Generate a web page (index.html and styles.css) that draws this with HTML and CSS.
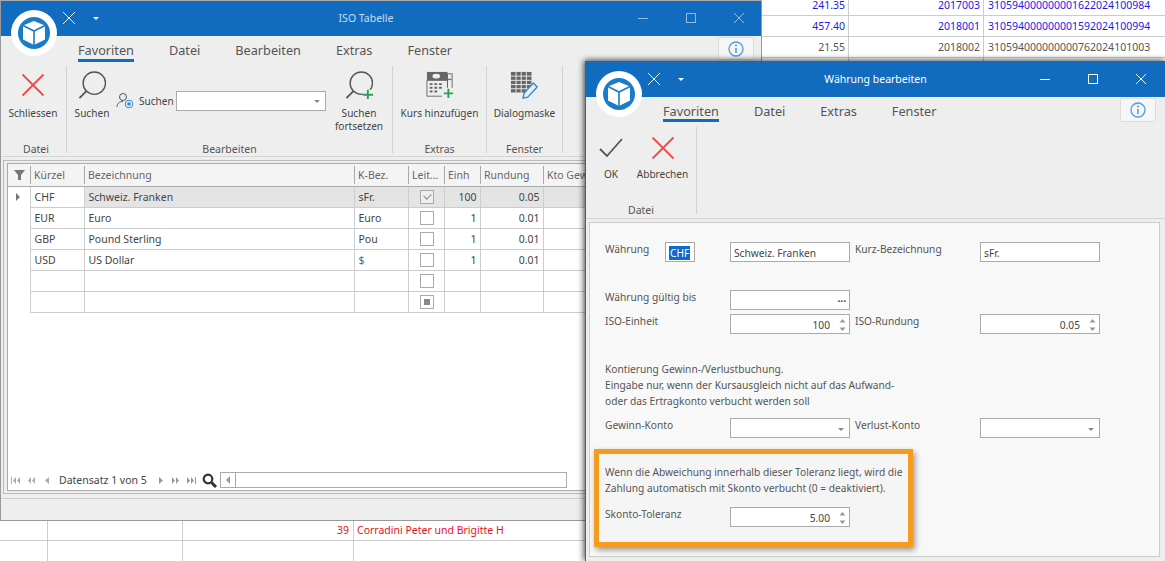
FILE: index.html
```html
<!DOCTYPE html>
<html>
  <head>
    <meta charset="utf-8">
    <title>Währung bearbeiten</title>
    <link rel="stylesheet" href="styles.css">
  </head>
  <body>
    <svg class="defs" width="0" height="0">
      <symbol id="logo" viewBox="0 0 46 46">
        <circle cx="23" cy="23" r="23" fill="#fff"/>
        <circle cx="23" cy="23" r="16" fill="#1a7cc9"/>
        <path d="M23 11l11 4.500v14l-11 5.500-11-5.500v-14z" fill="#fff"/>
        <path d="M12 15.500l11 5.500 11-5.500M23 21v14" fill="none" stroke="#1a7cc9" stroke-width="1.600"/>
      </symbol>
      <symbol id="cross" viewBox="0 0 24 24">
        <path d="M1.500 1.500l21 21M22.500 1.500l-21 21" fill="none" stroke="#f04b4b" stroke-width="1.800"/>
      </symbol>
      <symbol id="info" viewBox="0 0 18 18">
        <circle cx="9" cy="9" r="7" fill="none" stroke="#4b9fe0" stroke-width="1.300"/>
        <path d="M9 8v5" stroke="#4b9fe0" stroke-width="1.600"/>
        <circle cx="9" cy="5.600" r="1" fill="#4b9fe0"/>
      </symbol>
      <symbol id="spin" viewBox="0 0 9 16">
        <path d="M4.500 2l3 3.500h-6zM4.500 14l3-3.500h-6z" fill="#999"/>
      </symbol>
    </svg>

    <!-- Tabelle im Hintergrund -->
    <div class="sheet sheet-top">
      <div class="sheet-row blue"><span>241.35</span><span>2017003</span><span>310594000000001622024100984</span></div>
      <div class="sheet-row blue"><span>457.40</span><span>2018001</span><span>310594000000001592024100994</span></div>
      <div class="sheet-row"><span>21.55</span><span>2018002</span><span>310594000000000762024101003</span></div>
      <div class="sheet-row"><span></span><span></span><span></span></div>
    </div>
    <div class="sheet sheet-bottom">
      <div class="sheet-row red"><span></span><span></span><span>39</span><span>Corradini Peter und Brigitte H</span></div>
      <div class="sheet-row"><span></span><span></span><span></span><span></span></div>
    </div>

    <!-- ISO Tabelle -->
    <div class="win win-iso">
      <div class="titlebar inactive">
        <svg class="logo"><use href="#logo"/></svg>
        <svg class="qat-x" viewBox="0 0 12 12"><path d="M0 0l12 12M12 0L0 12" fill="none" stroke="#fff" stroke-width="1"/></svg>
        <span class="qat-caret"></span>
        <span class="title">ISO Tabelle</span>
        <span class="winbtns">
          <svg viewBox="0 0 12 12"><path d="M1 6.500h10" stroke="#fff" stroke-width="1"/></svg>
          <svg viewBox="0 0 12 12"><rect x="1.500" y="1.500" width="9" height="9" fill="none" stroke="#fff"/></svg>
          <svg viewBox="0 0 12 12"><path d="M1 1l10 10M11 1L1 11" fill="none" stroke="#fff"/></svg>
        </span>
      </div>
      <div class="tabs">
        <span class="tab active">Favoriten</span>
        <span class="tab">Datei</span>
        <span class="tab">Bearbeiten</span>
        <span class="tab">Extras</span>
        <span class="tab">Fenster</span>
        <span class="infobtn"><svg width="18" height="18"><use href="#info"/></svg></span>
      </div>
      <div class="ribbon">
        <div class="group g-datei">
          <div class="items">
            <div class="item"><svg class="big" viewBox="0 0 24 24"><use href="#cross"/></svg><span>Schliessen</span></div>
          </div>
          <div class="group-name">Datei</div>
        </div>
        <div class="group g-bearb">
          <div class="items">
            <div class="item">
              <svg class="big" viewBox="0 0 30 30"><circle cx="17.500" cy="13" r="12" fill="none" stroke="#555" stroke-width="1.500"/><path d="M9 21.500L1.500 29" stroke="#555" stroke-width="2"/></svg>
              <span>Suchen</span>
            </div>
            <div class="search-combo">
              <svg width="18" height="18" viewBox="0 0 18 18"><circle cx="7" cy="5" r="3.500" fill="none" stroke="#555"/><path d="M1 15c0-3.500 2.500-5.500 6-5.500" fill="none" stroke="#555"/><circle cx="13" cy="12" r="3.800" fill="none" stroke="#2d8ad6"/><circle cx="13" cy="12" r="1.800" fill="#2d8ad6"/></svg>
              <span class="search-label">Suchen</span>
              <span class="combo"><i class="caret"></i></span>
            </div>
            <div class="item">
              <svg class="big" viewBox="0 0 30 30"><circle cx="17.500" cy="13" r="12" fill="none" stroke="#555" stroke-width="1.500"/><path d="M9 21.500L1.500 29" stroke="#555" stroke-width="2"/><rect x="19" y="20" width="11" height="10" fill="#eee"/><path d="M24.500 20v11M19 25.500h11" stroke="#2f9e4f" stroke-width="2"/></svg>
              <span>Suchen<br>fortsetzen</span>
            </div>
          </div>
          <div class="group-name">Bearbeiten</div>
        </div>
        <div class="group g-extras">
          <div class="items">
            <div class="item">
              <svg class="big" viewBox="0 0 30 30"><rect x="1" y="1" width="22" height="9" fill="#666"/><ellipse cx="11" cy="5.500" rx="4" ry="2.500" fill="#eee"/><rect x="23" y="3" width="5" height="20" fill="none" stroke="#666"/><path d="M1 10h22v17H1z" fill="none" stroke="#666"/><path d="M4 13h3v2H4zM9 13h3v2H9zM14 13h3v2h-3zM4 17h3v2H4zM9 17h3v2H9zM14 17h3v2h-3zM4 21h3v2H4zM9 21h3v2H9z" fill="#666"/><path d="M23.500 9h4" stroke="#2d8ad6" stroke-width="1.500"/><rect x="17" y="18" width="13" height="12" fill="#eee"/><path d="M24 19v10M19 24h10" stroke="#2f9e4f" stroke-width="2"/></svg>
              <span>Kurs hinzufügen</span>
            </div>
          </div>
          <div class="group-name">Extras</div>
        </div>
        <div class="group g-fenster">
          <div class="items">
            <div class="item">
              <svg class="big" viewBox="0 0 30 30"><rect x="1" y="1" width="22" height="22" fill="#666"/><path d="M1 5.500h22M1 10h22M1 14.500h22M1 19h22M6.500 1v22M12 1v22M17.500 1v22" stroke="#eee" stroke-width="1"/><path d="M14 29l1-5 10-11 4 4-10 11z" fill="#eee" stroke="#2d8ad6" stroke-width="1.500"/></svg>
              <span>Dialogmaske</span>
            </div>
          </div>
          <div class="group-name">Fenster</div>
        </div>
      </div>
      <div class="gridframe">
        <div class="gridbox">
          <table class="grid">
            <colgroup>
              <col class="c-ind"><col class="c-kz"><col class="c-bez"><col class="c-kb"><col class="c-leit"><col class="c-einh"><col class="c-rund"><col class="c-kto">
            </colgroup>
            <thead>
              <tr>
                <th class="ind"><svg width="11" height="10" viewBox="0 0 11 10"><path d="M0 0h11L7 5v5H4V5z" fill="#777"/></svg></th>
                <th><span>Kürzel</span></th><th><span>Bezeichnung</span></th><th><span>K-Bez.</span></th><th><span>Leit…</span></th><th><span>Einh</span></th><th><span>Rundung</span></th><th><span>Kto Gewinn</span></th>
              </tr>
            </thead>
            <tbody>
              <tr class="current">
                <td class="ind"><i class="rowmark"></i></td><td class="focus">CHF</td><td>Schweiz. Franken</td><td>sFr.</td><td class="chk"><i class="box checked"></i></td><td class="num">100</td><td class="num">0.05</td><td></td>
              </tr>
              <tr><td class="ind"></td><td>EUR</td><td>Euro</td><td>Euro</td><td class="chk"><i class="box"></i></td><td class="num">1</td><td class="num">0.01</td><td></td></tr>
              <tr><td class="ind"></td><td>GBP</td><td>Pound Sterling</td><td>Pou</td><td class="chk"><i class="box"></i></td><td class="num">1</td><td class="num">0.01</td><td></td></tr>
              <tr><td class="ind"></td><td>USD</td><td>US Dollar</td><td class="dollar">$</td><td class="chk"><i class="box"></i></td><td class="num">1</td><td class="num">0.01</td><td></td></tr>
              <tr><td class="ind"></td><td></td><td></td><td></td><td class="chk"><i class="box"></i></td><td></td><td></td><td></td></tr>
              <tr><td class="ind"></td><td></td><td></td><td></td><td class="chk"><i class="box mixed"></i></td><td></td><td></td><td></td></tr>
            </tbody>
          </table>
          <div class="gridnav">
            <svg class="navicons" width="42" height="7" viewBox="0 0 42 7"><path d="M0 0h1v7H0zM5 0v7L2 3.500zM9 0v7L6 3.500zM20 0v7l-3-3.500zM24 0v7l-3-3.500zM38 0v7l-4-3.500z" fill="#aaa"/></svg>
            <span class="navtext">Datensatz 1 von 5</span>
            <svg class="navicons" width="38" height="7" viewBox="0 0 38 7"><path d="M0 0v7l4-3.500zM13 0v7l3-3.500zM17 0v7l3-3.500zM28 0v7l3-3.500zM32 0v7l3-3.500zM36 0h1v7h-1z" fill="#999"/></svg>
            <svg class="navsearch" width="15" height="15" viewBox="0 0 15 15"><circle cx="6" cy="6" r="4.300" fill="none" stroke="#333" stroke-width="2.200"/><path d="M9.500 9.500L14 14" stroke="#333" stroke-width="3"/></svg>
            <span class="hscroll"><b></b></span>
          </div>
        </div>
      </div>
      <div class="statusbar"></div>
    </div>

    <!-- Währung bearbeiten -->
    <div class="win win-cur">
      <div class="titlebar">
        <svg class="logo"><use href="#logo"/></svg>
        <svg class="qat-x" viewBox="0 0 12 12"><path d="M0 0l12 12M12 0L0 12" fill="none" stroke="#fff" stroke-width="1"/></svg>
        <span class="qat-caret"></span>
        <span class="title">Währung bearbeiten</span>
        <span class="winbtns">
          <svg viewBox="0 0 12 12"><path d="M1 6.500h10" stroke="#fff" stroke-width="1"/></svg>
          <svg viewBox="0 0 12 12"><rect x="1.500" y="1.500" width="9" height="9" fill="none" stroke="#fff"/></svg>
          <svg viewBox="0 0 12 12"><path d="M1 1l10 10M11 1L1 11" fill="none" stroke="#fff"/></svg>
        </span>
      </div>
      <div class="tabs">
        <span class="tab active">Favoriten</span>
        <span class="tab">Datei</span>
        <span class="tab">Extras</span>
        <span class="tab">Fenster</span>
        <span class="infobtn"><svg width="18" height="18"><use href="#info"/></svg></span>
      </div>
      <div class="ribbon ribbon-cur">
        <div class="group g-ok">
          <div class="items">
            <div class="item item-ok"><svg class="big" viewBox="0 0 24 24"><path d="M1 13l7 7L23 3" fill="none" stroke="#555" stroke-width="1.800"/></svg><span>OK</span></div>
            <div class="item item-cancel"><svg class="big" viewBox="0 0 24 24"><use href="#cross"/></svg><span>Abbrechen</span></div>
          </div>
          <div class="group-name">Datei</div>
        </div>
      </div>
      <div class="formpanel">
        <div class="row">
          <label class="lab-cur">Währung</label>
          <span class="field f-chf"><span class="sel">CHF</span></span>
          <span class="field"><span>Schweiz. Franken</span></span>
          <label class="lab2">Kurz-Bezeichnung</label>
          <span class="field"><span>sFr.</span></span>
        </div>
        <div class="row row-date">
          <label class="lab1">Währung gültig bis</label>
          <span class="field end"><span class="dots">···</span></span>
        </div>
        <div class="row row-iso">
          <label class="lab1">ISO-Einheit</label>
          <span class="field end"><span>100</span><svg class="spin"><use href="#spin"/></svg></span>
          <label class="lab2">ISO-Rundung</label>
          <span class="field end"><span>0.05</span><svg class="spin"><use href="#spin"/></svg></span>
        </div>
        <p class="note">Kontierung Gewinn-/Verlustbuchung.<br>Eingabe nur, wenn der Kursausgleich nicht auf das Aufwand-<br>oder das Ertragkonto verbucht werden soll</p>
        <div class="row">
          <label class="lab1">Gewinn-Konto</label>
          <span class="field end"><i class="caret"></i></span>
          <label class="lab2">Verlust-Konto</label>
          <span class="field end"><i class="caret"></i></span>
        </div>
        <div class="callout">
          <p class="note">Wenn die Abweichung innerhalb dieser Toleranz liegt, wird die<br>Zahlung automatisch mit Skonto verbucht (0 = deaktiviert).</p>
          <div class="row">
            <label class="lab1">Skonto-Toleranz</label>
            <span class="field end"><span>5.00</span><svg class="spin"><use href="#spin"/></svg></span>
          </div>
        </div>
      </div>
    </div>
  </body>
</html>
```

FILE: styles.css
```css
* {
  box-sizing: border-box;
}
html, body {
  margin: 0;
  height: 100%;
}
body {
  position: relative;
  width: 1165px;
  height: 561px;
  overflow: hidden;
  background: #fff;
  font-family: "Noto Sans", "Liberation Sans", sans-serif;
  font-size: 10.5px;
  color: #444;
}
.defs {
  position: absolute;
}

/* spreadsheet behind the windows */
.sheet {
  position: absolute;
  color: #555;
}
.sheet-top {
  left: 762px;
  top: -5px;
  width: 403px;
}
.sheet-bottom {
  left: 0;
  top: 520px;
  width: 585px;
}
.sheet-row {
  display: flex;
  height: 21px;
  line-height: 20px;
  border-bottom: 1px solid #ccc;
}
.sheet-row span {
  border-right: 1px solid #ccc;
  padding: 0 3px;
  text-align: right;
  white-space: nowrap;
}
.sheet-top span:nth-child(1) {
  width: 87px;
}
.sheet-top span:nth-child(2) {
  width: 135px;
}
.sheet-top span:nth-child(3) {
  flex: 1;
  text-align: left;
  padding-left: 4px;
  border-right: 0;
}
.sheet-bottom span:nth-child(1) {
  width: 48px;
}
.sheet-bottom span:nth-child(2) {
  width: 135px;
}
.sheet-bottom span:nth-child(3) {
  width: 171px;
  padding-right: 4px;
}
.sheet-bottom span:nth-child(4) {
  flex: 1;
  text-align: left;
  border-right: 0;
}
.blue {
  color: #1a1ae6;
}
.red {
  color: #e8101c;
}

/* windows */
.win {
  position: absolute;
  display: flex;
  flex-direction: column;
  background: #eee;
}
.win-iso {
  left: 0;
  top: 0;
  width: 762px;
  height: 521px;
  border: 1px solid #999;
  border-top-color: #aaa;
}
.win-cur {
  left: 585px;
  top: 61px;
  width: 580px;
  height: 500px;
  border-left: 1px solid #116bbf;
  box-shadow: -2px 0 6px rgba(0, 0, 0, 0.45), 0 -2px 5px rgba(0, 0, 0, 0.35);
}
.titlebar {
  position: relative;
  flex: none;
  height: 35px;
  background: #116cc0;
  color: #fff;
}
.win-cur .titlebar {
  height: 36px;
}
.logo {
  position: absolute;
  left: 10px;
  top: 9px;
  width: 46px;
  height: 46px;
  z-index: 2;
}
.win-cur .logo {
  top: 10px;
}
.qat-x {
  position: absolute;
  left: 62px;
  top: 11px;
  width: 12px;
  height: 12px;
}
.win-cur .qat-x {
  top: 12px;
}
.qat-caret {
  position: absolute;
  left: 92px;
  top: 16px;
  border: 3px solid transparent;
  border-top: 3px solid #fff;
  border-left-width: 3.500px;
  border-right-width: 3.500px;
}
.win-cur .qat-caret {
  top: 17px;
}
.title {
  display: block;
  text-align: center;
  line-height: 34px;
  padding-right: 30px;
}
.win-cur .title {
  padding-right: 0;
  line-height: 36px;
}
.inactive .title {
  opacity: 0.75;
}
.inactive .winbtns {
  opacity: 0.55;
}
.winbtns {
  position: absolute;
  right: 0;
  top: 11px;
  display: flex;
  gap: 36px;
  padding-right: 16px;
}
.win-cur .winbtns {
  top: 12px;
  padding-right: 18px;
}
.winbtns svg {
  width: 12px;
  height: 12px;
  display: block;
}
.tabs {
  position: relative;
  flex: none;
  display: flex;
  gap: 35px;
  height: 28px;
  padding-left: 77px;
  font-size: 12.7px;
  line-height: 29px;
  color: #555;
}
.win-cur .tabs {
  height: 30px;
}
.tab.active {
  box-shadow: inset 0 -3px 0 #116cc0;
  height: 26px;
}
.win-cur .tab.active {
  height: 25px;
}
.infobtn {
  position: absolute;
  right: 7px;
  top: 1px;
  width: 36px;
  height: 23px;
  display: flex;
  align-items: center;
  justify-content: center;
  background: #f6f6f6;
  border: 1px solid #ddd;
  border-radius: 2px;
}
.win-cur .infobtn {
  right: 9px;
  height: 24px;
}

/* ribbon */
.ribbon {
  flex: none;
  display: flex;
  height: 93px;
  padding-top: 2px;
  padding-left: 5px;
  border-bottom: 1px solid #d4d4d4;
}
.ribbon-cur {
  height: 92px;
  padding: 0;
}
.group {
  display: flex;
  flex-direction: column;
  border-right: 1px solid #d2d2d2;
  height: 87px;
  text-align: center;
  flex: none;
}
.g-datei {
  width: 61px;
}
.g-datei .items {
  padding-right: 6px;
}
.g-bearb {
  width: 326px;
}
.g-extras {
  width: 94px;
}
.g-fenster {
  width: 76px;
}
.g-ok {
  width: 111px;
}
.items {
  flex: none;
  height: 76px;
  display: flex;
  justify-content: space-around;
}
.g-bearb .items, .g-ok .items {
  justify-content: flex-start;
}
.group-name {
  flex: none;
  height: 11px;
  line-height: 14px;
  color: #555;
}
.item {
  display: flex;
  flex-direction: column;
  align-items: center;
  font-size: 10.1px;
  line-height: 13px;
  padding-top: 5px;
  white-space: nowrap;
}
.item svg.big {
  width: 28px;
  height: 28px;
  margin-bottom: 8px;
  flex: none;
}
.g-datei .item svg.big {
  width: 24px;
  height: 24px;
  margin-top: 2px;
  margin-bottom: 10px;
}
.g-ok .item {
  padding-top: 7px;
}
.g-ok .item svg.big {
  width: 24px;
  height: 24px;
  margin-top: 2px;
  margin-bottom: 8px;
}
.g-bearb .item:first-child {
  width: 50px;
}
.item-ok {
  width: 38px;
  margin-left: 6px;
}
.item-cancel {
  margin-left: 6px;
  width: 53px;
}
.search-combo {
  display: flex;
  align-items: center;
  height: 20px;
  margin-top: 25px;
  margin-left: -1px;
}
.search-label {
  margin: 0 3px 0 5px;
  width: 34px;
  font-size: 10.1px;
  white-space: nowrap;
}
.combo {
  position: relative;
  display: block;
  width: 150px;
  height: 20px;
  background: #fff;
  border: 1px solid #aaa;
}
.combo .caret {
  position: absolute;
  right: 5px;
  top: 8px;
}
.search-combo + .item {
  width: 64px;
  margin-left: 1px;
}
.caret {
  display: block;
  border: 3px solid transparent;
  border-top-color: #888;
  border-bottom: 0;
  width: 0;
  height: 3px;
}

/* grid */
.gridframe {
  flex: 1;
  margin: 3px 2px 0;
  padding: 2px 0 2px 3px;
  border: 1px solid #bbb;
  border-right: 0;
  min-height: 0;
}
.gridbox {
  display: flex;
  flex-direction: column;
  height: 100%;
  background: #fff;
  border: 1px solid #aaa;
  border-right: 0;
}
.grid {
  table-layout: fixed;
  width: 655px;
  border-collapse: collapse;
  flex: none;
}
.c-ind { width: 22px; }
.c-kz { width: 54px; }
.c-bez { width: 270px; }
.c-kb { width: 54px; }
.c-leit { width: 36px; }
.c-einh { width: 36px; }
.c-rund { width: 63px; }
.c-kto { width: 120px; }
.grid th {
  height: 22px;
  font-weight: normal;
  text-align: left;
  color: #666;
  background: #f4f4f4;
  padding: 0;
  border-bottom: 1px solid #aaa;
}
.grid th span {
  display: block;
  height: 18px;
  line-height: 18px;
  padding-left: 3px;
  border-left: 1px solid #aaa;
  overflow: hidden;
  white-space: nowrap;
}
.grid th.ind {
  padding-left: 6px;
  line-height: 0;
}
.grid td {
  height: 21px;
  padding: 0 3px 0 4px;
  border-right: 1px solid #ccc;
  border-bottom: 1px solid #ccc;
  white-space: nowrap;
  overflow: hidden;
}
.grid td.ind {
  border-bottom: 0;
  padding-left: 8px;
  background: #fff;
}
.current td {
  background: #e4e4e4;
}
.current td.focus {
  background: #fff;
}
.rowmark {
  display: block;
  width: 0;
  border: 4px solid transparent;
  border-left: 4px solid #777;
  border-right: 0;
}
.grid td.num {
  text-align: right;
}
.grid td.dollar {
  color: #3a6ea5;
}
.grid td.chk {
  padding: 0 0 0 1px;
}
.box {
  display: block;
  position: relative;
  width: 14px;
  height: 14px;
  margin: 0 auto;
  border: 1px solid #aaa;
  background: #fff;
}
.current .box {
  background: #eee;
}
.box.checked::after {
  content: "";
  position: absolute;
  left: 3px;
  top: 2px;
  width: 6px;
  height: 4px;
  border-left: 1.500px solid #888;
  border-bottom: 1.500px solid #888;
  transform: rotate(-45deg);
}
.box.mixed::after {
  content: "";
  position: absolute;
  left: 3px;
  top: 3px;
  width: 6px;
  height: 6px;
  background: #888;
}
.gridnav {
  flex: none;
  display: flex;
  align-items: center;
  height: 19px;
  margin-top: auto;
  padding: 1px 0 2px 3px;
  color: #444;
}
.navicons {
  flex: none;
}
.navtext {
  width: 88px;
  margin: 0 12px 0 6px;
  white-space: nowrap;
}
.navsearch {
  margin-left: 5px;
  flex: none;
}
.hscroll {
  display: block;
  flex: none;
  align-self: flex-start;
  width: 347px;
  height: 16px;
  margin-left: 3px;
  border: 1px solid #aaa;
  background: #fff;
  position: relative;
}
.hscroll::before {
  content: "";
  position: absolute;
  left: 5px;
  top: 3px;
  border: 4px solid transparent;
  border-right: 4px solid #999;
  border-left: 0;
}
.hscroll b {
  display: block;
  width: 15px;
  height: 14px;
  border-right: 1px solid #aaa;
}
.statusbar {
  flex: none;
  height: 22px;
  margin-top: 4px;
  border-top: 1px solid #ccc;
}

/* form */
.formpanel {
  flex: 1;
  margin: 3px 5px 4px 3px;
  padding: 19px 0 0 15px;
  background: #f8f8f8;
  border: 1px solid #ccc;
  font-size: 10.2px;
  color: #555;
}
.row {
  display: flex;
  align-items: flex-start;
  height: 20px;
}
.row label {
  flex: none;
  line-height: 14px;
}
.lab1 {
  width: 125px;
}
.lab-cur {
  width: 60px;
}
.lab2 {
  width: 130px;
  padding-left: 5px;
}
.field {
  flex: none;
  display: flex;
  align-items: center;
  width: 120px;
  height: 20px;
  background: #fff;
  border: 1px solid #aaa;
  padding: 2px 3px 0;
  line-height: 14px;
  color: #444;
}
.field.end {
  justify-content: flex-end;
  gap: 8px;
  padding-right: 2px;
}
.f-chf {
  width: 30px;
  margin-right: 35px;
  padding: 2px 0 0 3px;
}
.sel {
  background: #0f6ac9;
  color: #fff;
  padding: 0 1px;
}
.row-date {
  margin-top: 28px;
}
.row-iso {
  margin-top: 4px;
}
.dots {
  font-weight: bold;
  margin-right: 1px;
}
.spin {
  width: 9px;
  height: 16px;
  flex: none;
}
.field .caret {
  margin: 0 3px 0 0;
}
.note {
  margin: 27px 0 9px;
  line-height: 16px;
  white-space: nowrap;
  color: #555;
}
.callout {
  width: 319px;
  height: 98px;
  margin: 11px 0 0 -11px;
  padding-left: 6px;
  border: 5px solid #f59c1e;
  box-shadow: 2px 3px 6px rgba(0, 0, 0, 0.4);
  background: #f5f5f5;
}
.callout .note {
  margin: 10px 0 11px;
}
```
